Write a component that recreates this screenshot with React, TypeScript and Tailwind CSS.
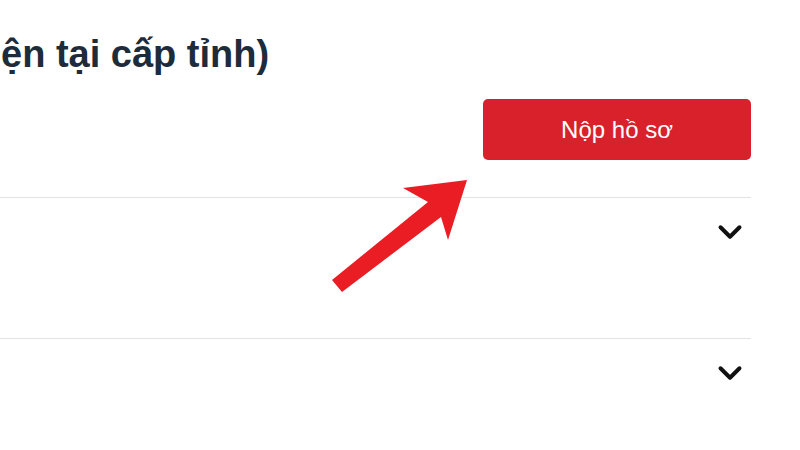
import { ChevronDown } from "lucide-react"

const rows = [0, 1]

export default function App() {
    return (
        <div className="w-[800px] h-[450px] overflow-hidden bg-white font-['Liberation_Sans',Arial,sans-serif]">
            {/* Title, cut off on the left */}
            <div className="pt-[30px] pl-[1px] h-[99px]">
                <h1 className="text-[38px] leading-[48px] font-bold text-[#1d2b3a] whitespace-nowrap">
                    ện tại cấp tỉnh)
                </h1>
            </div>

            {/* Action bar */}
            <div className="w-[751px] flex justify-end">
                <button className="w-[268px] h-[61px] rounded-[5px] bg-[#d9212b] text-white text-[24px] flex items-center justify-center">
                    Nộp hồ sơ
                </button>
            </div>

            {/* Accordion rows */}
            <div className="w-[751px] mt-[37px]">
                {rows.map((r) => (
                    <div key={r} className="border-t border-[#e3e3e3] h-[141px] flex justify-end pt-[15px] pr-[2px]">
                        <ChevronDown className="w-[38px] h-[38px] text-[#111]" strokeWidth={2.5} />
                    </div>
                ))}
            </div>

            {/* Pointer arrow over the content */}
            <svg className="absolute left-0 top-0 pointer-events-none" width="800" height="450" viewBox="0 0 800 450">
                <polygon
                    points="332,280 342,292 441,217 448,240 467,180 403,188 428,202"
                    fill="#ea1c24"
                />
            </svg>
        </div>
    )
}
